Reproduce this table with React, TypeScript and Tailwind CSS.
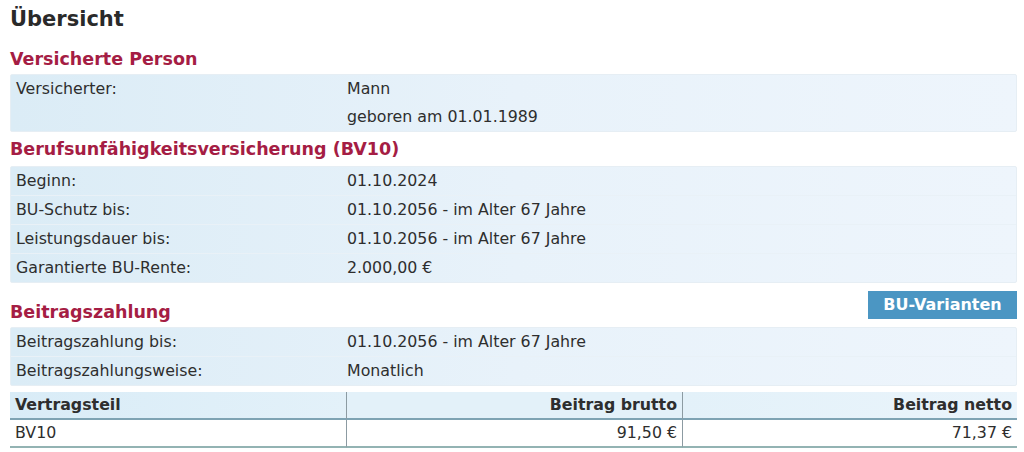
import React from 'react';

const font = { fontFamily: '"DejaVu Sans", Verdana, sans-serif' };

interface Row {
  label: string;
  values: string[];
}

const InfoBox: React.FC<{ rows: Row[] }> = ({ rows }) => (
  <div className="rounded-[2px] border border-[#e6eef4] bg-gradient-to-r from-[#dbecf6] via-[#e8f2fa] to-[#eef5fc]">
    {rows.map((r, i) => (
      <div
        key={r.label + i}
        className={`grid grid-cols-[336px_1fr] ${i < rows.length - 1 ? 'border-b border-[#e9f1f7]' : ''}`}
      >
        <div className="px-[5px] py-[4px] leading-[20px]">{r.label}</div>
        <div className="flex flex-col">
          {r.values.map((v) => (
            <div key={v} className="py-[4px] leading-[20px]">
              {v}
            </div>
          ))}
        </div>
      </div>
    ))}
  </div>
);

const SectionTitle: React.FC<{ children: React.ReactNode }> = ({ children }) => (
  <h2 className="text-[17.5px] font-bold text-[#a51d44] leading-[22px]">{children}</h2>
);

export default function App() {
  return (
    <div className="w-[1024px] h-[452px] bg-white text-[15.8px] text-[#2e2e2e] px-[10px] pt-[6px]" style={font}>
      <h1 className="text-[21px] font-bold text-[#2a2a2a] leading-[26px] mb-[16px]">Übersicht</h1>

      <div className="w-[1007px]">
        <SectionTitle>Versicherte Person</SectionTitle>
        <div className="mt-[4px]">
          <InfoBox rows={[{ label: 'Versicherter:', values: ['Mann', 'geboren am 01.01.1989'] }]} />
        </div>

        <div className="mt-[6px]">
          <SectionTitle>Berufsunfähigkeitsversicherung (BV10)</SectionTitle>
        </div>
        <div className="mt-[6px]">
          <InfoBox
            rows={[
              { label: 'Beginn:', values: ['01.10.2024'] },
              { label: 'BU-Schutz bis:', values: ['01.10.2056 - im Alter 67 Jahre'] },
              { label: 'Leistungsdauer bis:', values: ['01.10.2056 - im Alter 67 Jahre'] },
              { label: 'Garantierte BU-Rente:', values: ['2.000,00 €'] },
            ]}
          />
        </div>

        <div className="mt-[8px] flex items-start justify-between">
          <div className="pt-[10px]">
            <SectionTitle>Beitragszahlung</SectionTitle>
          </div>
          <button className="h-[28px] w-[149px] bg-[#4b96c3] text-white font-bold text-[16px] leading-[28px]">
            BU-Varianten
          </button>
        </div>
        <div className="mt-[4px]">
          <InfoBox
            rows={[
              { label: 'Beitragszahlung bis:', values: ['01.10.2056 - im Alter 67 Jahre'] },
              { label: 'Beitragszahlungsweise:', values: ['Monatlich'] },
            ]}
          />
        </div>

        <div className="mt-[6px] grid grid-cols-[336px_336px_1fr]">
          <div className="bg-gradient-to-r from-[#d9ecf7] to-[#e3f1f9] border-b-2 border-[#7ea3b3] px-[5px] h-[28px] leading-[26px] font-bold">
            Vertragsteil
          </div>
          <div className="bg-[#e3f1f9] border-b-2 border-l border-[#7ea3b3] border-l-[#8c9ba2] px-[5px] h-[28px] leading-[26px] font-bold text-right">
            Beitrag brutto
          </div>
          <div className="bg-gradient-to-r from-[#e3f1f9] to-[#eaf4fb] border-b-2 border-l border-[#7ea3b3] border-l-[#8c9ba2] px-[5px] h-[28px] leading-[26px] font-bold text-right">
            Beitrag netto
          </div>
          <div className="border-b-2 border-[#93b3b3] px-[5px] h-[28px] leading-[25px]">BV10</div>
          <div className="border-b-2 border-l border-[#93b3b3] border-l-[#8c9ba2] px-[5px] h-[28px] leading-[25px] text-right">
            91,50 €
          </div>
          <div className="border-b-2 border-l border-[#93b3b3] border-l-[#8c9ba2] px-[5px] h-[28px] leading-[25px] text-right">
            71,37 €
          </div>
        </div>
      </div>
    </div>
  );
}
